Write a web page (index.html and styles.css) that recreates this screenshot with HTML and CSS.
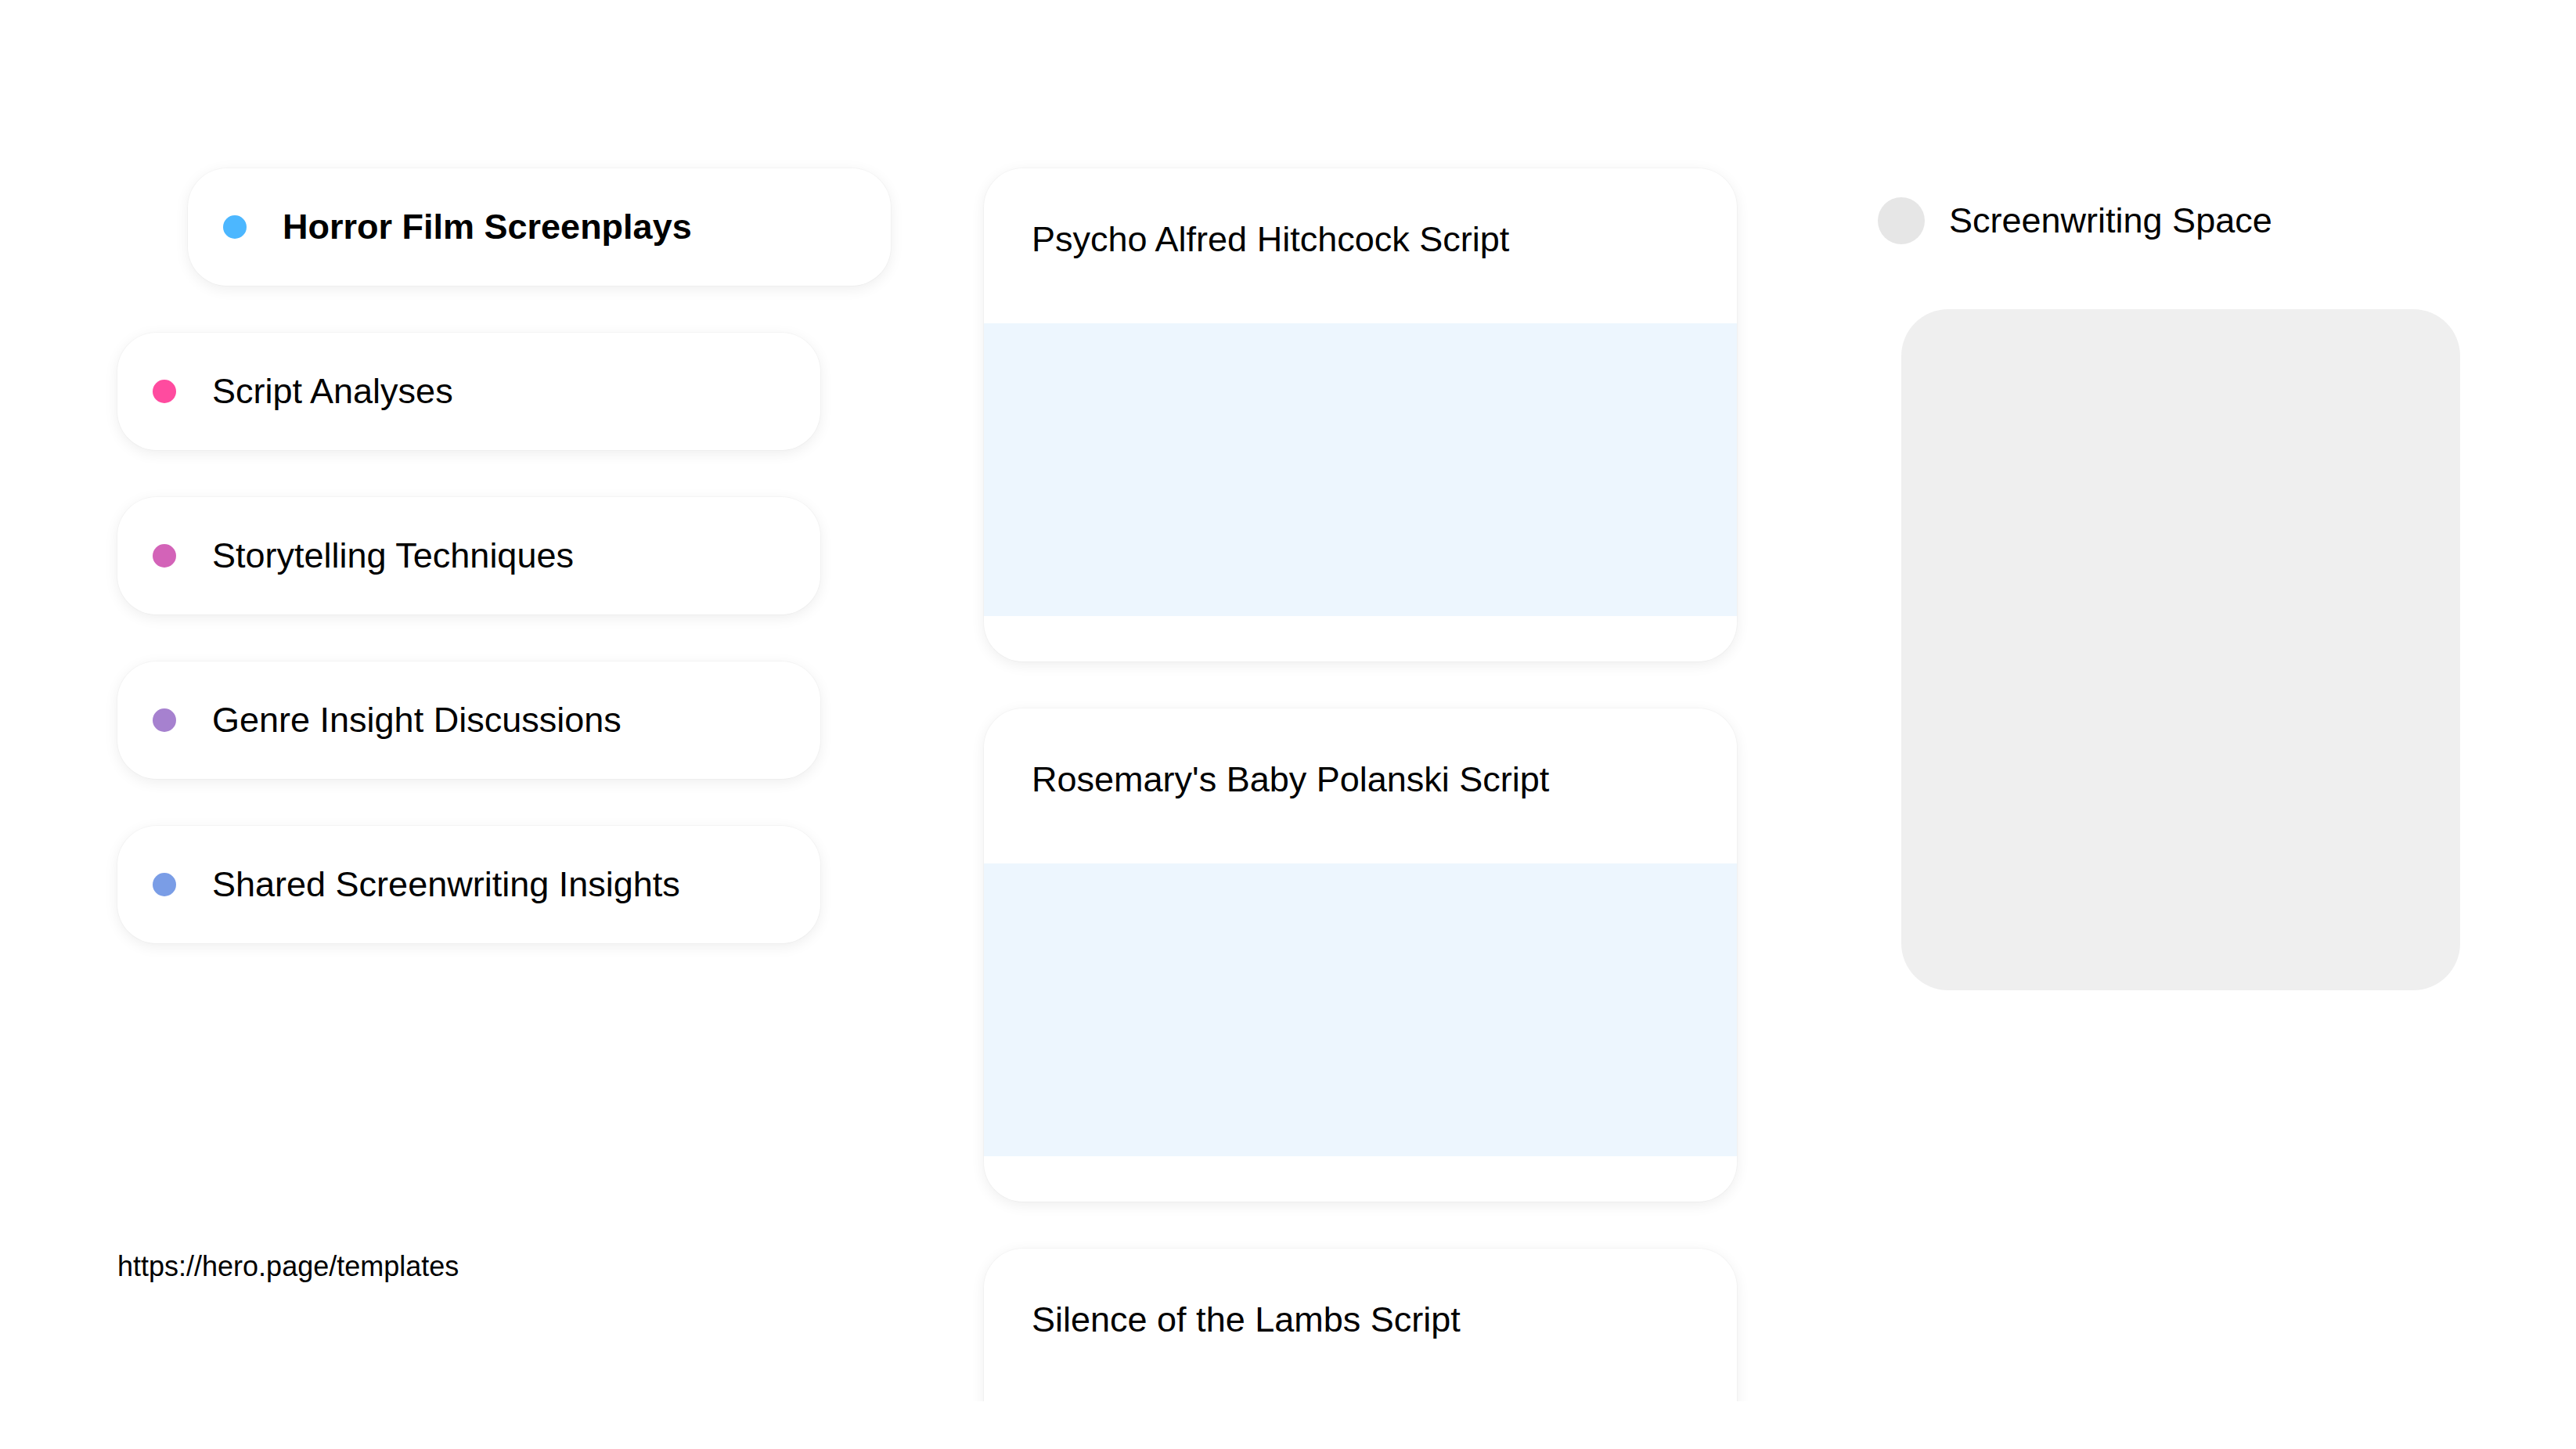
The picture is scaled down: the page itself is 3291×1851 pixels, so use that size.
FILE: index.html
```html
<!DOCTYPE html>
<html>
<head>
  <meta charset="UTF-8">
  <meta name="viewport" content="width=device-width, initial-scale=1.0">
  <title>Horror Film Screenplays</title>
  <link rel="stylesheet" href="styles.css">
</head>
<body>
  <div class="page">
    <!-- categories -->
    <div class="side">
      <ul class="topics">
        <li class="topic active"><span class="dot dot-blue"></span>Horror Film Screenplays</li>
        <li class="topic"><span class="dot dot-pink"></span>Script Analyses</li>
        <li class="topic"><span class="dot dot-magenta"></span>Storytelling Techniques</li>
        <li class="topic"><span class="dot dot-purple"></span>Genre Insight Discussions</li>
        <li class="topic"><span class="dot dot-periwinkle"></span>Shared Screenwriting Insights</li>
      </ul>
      <div class="source">https://hero.page/templates</div>
    </div>

    <!-- scripts -->
    <div class="feed">
      <div class="script-card">
        <h3 class="script-title">Psycho Alfred Hitchcock Script</h3>
        <div class="script-preview"></div>
      </div>
      <div class="script-card">
        <h3 class="script-title">Rosemary's Baby Polanski Script</h3>
        <div class="script-preview"></div>
      </div>
      <div class="script-card">
        <h3 class="script-title">Silence of the Lambs Script</h3>
        <div class="script-preview"></div>
      </div>
    </div>

    <!-- workspace -->
    <div class="space">
      <div class="space-head">
        <span class="avatar"></span>
        <span class="space-name">Screenwriting Space</span>
      </div>
      <div class="space-box"></div>
    </div>
  </div>
</body>
</html>
```

FILE: styles.css
```css
/* base */
html, body {
  margin: 0;
  padding: 0;
  background: #fff;
}
body {
  font-family: "Liberation Sans", Arial, sans-serif;
  color: #000;
  height: 1851px;
  overflow: hidden;
}
.page {
  display: flex;
  height: 1851px;
  box-sizing: border-box;
  padding: 215px 118px 61px 150px;
}

/* left column */
.side {
  width: 988px;
  display: flex;
  flex-direction: column;
}
.topics {
  list-style: none;
  margin: 0;
  padding: 0;
  display: flex;
  flex-direction: column;
  gap: 60px;
}
.topic {
  width: 898px;
  height: 150px;
  box-sizing: border-box;
  display: flex;
  align-items: center;
  gap: 46px;
  padding-left: 45px;
  background: #fff;
  border-radius: 50px;
  box-shadow: 0 0 0 1px rgba(0, 0, 0, 0.025), 0 4px 18px rgba(0, 0, 0, 0.07);
  font-size: 45px;
}
.topic.active {
  margin-left: 90px;
  font-weight: bold;
}
.dot {
  width: 30px;
  height: 30px;
  border-radius: 50%;
  flex: none;
}
.dot-blue { background: #4cb7ff; }
.dot-pink { background: #ff4b9f; }
.dot-magenta { background: #d363b8; }
.dot-purple { background: #a681cf; }
.dot-periwinkle { background: #7a9de6; }

.source {
  margin-top: auto;
  margin-bottom: 151px;
  font-size: 36px;
}

/* middle column */
.feed {
  width: 962px;
  margin: -30px 150px 0 89px;
  padding: 30px 30px 0;
  display: flex;
  flex-direction: column;
  gap: 60px;
  overflow: hidden;
}
.script-card {
  flex: none;
  height: 630px;
  background: #fff;
  border-radius: 50px;
  overflow: hidden;
  box-shadow: 0 0 0 1px rgba(0, 0, 0, 0.025), 0 4px 18px rgba(0, 0, 0, 0.07);
}
.script-title {
  margin: 0;
  padding: 65px 61px 81px;
  font-size: 45px;
  font-weight: normal;
}
.script-preview {
  height: 374px;
  background: #edf6fe;
}

/* right column */
.space {
  width: 774px;
}
.space-head {
  display: flex;
  align-items: center;
  gap: 31px;
  margin-top: 37px;
  height: 60px;
}
.avatar {
  width: 60px;
  height: 60px;
  border-radius: 50%;
  background: #e6e6e6;
}
.space-name {
  font-size: 45px;
}
.space-box {
  margin: 83px 30px 0;
  height: 870px;
  background: #efefef;
  border-radius: 60px;
}
```
